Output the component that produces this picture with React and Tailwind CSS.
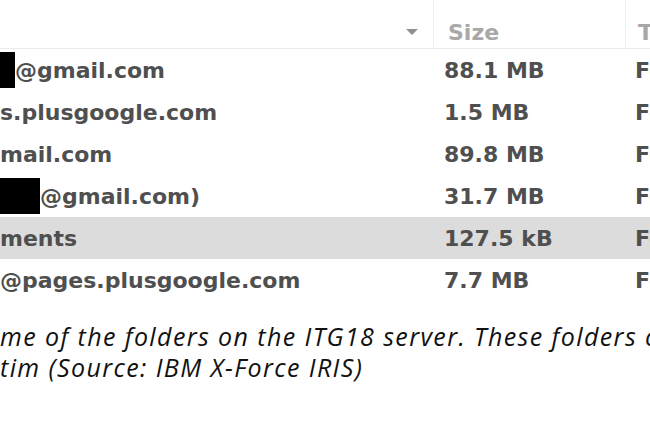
const rows = [
  { redact: 15, name: '@gmail.com', size: '88.1 MB' },
  { name: 's.plusgoogle.com', size: '1.5 MB' },
  { name: 'mail.com', size: '89.8 MB' },
  { redact: 40, name: '@gmail.com)', size: '31.7 MB' },
  { name: 'ments', size: '127.5 kB', selected: true },
  { name: '@pages.plusgoogle.com', size: '7.7 MB' },
];

export default function App() {
  return (
    <div className="w-[650px] h-[433px] overflow-hidden bg-white">
      {/* File list */}
      <div className="font-['DejaVu_Sans',sans-serif] font-bold text-[22px] text-[#4f4f4f]">
        {/* Header */}
        <div className="flex h-[49px] border-b border-[#ebebeb] text-[#a8a8a8]">
          <div className="w-[433px] shrink-0 flex items-center justify-end pr-[15px] pt-[16px]">
            <span className="w-0 h-0 border-l-[6px] border-r-[6px] border-t-[6px] border-l-transparent border-r-transparent border-t-[#909090]" />
          </div>
          <div className="w-[192px] shrink-0 flex items-center pl-[14px] pt-[16px] border-l border-[#f0f0f0]">Size</div>
          <div className="flex-1 flex items-center pl-[12px] pt-[16px] border-l border-[#f0f0f0]">T</div>
        </div>

        {/* Rows */}
        {rows.map((row, i) => (
          <div
            key={i}
            className={`flex h-[42px] items-center ${row.selected ? 'bg-[#dcdcdc]' : ''}`}
          >
            <div className="w-[433px] shrink-0 flex items-center whitespace-nowrap overflow-hidden">
              {row.redact && (
                <span className="h-[36px] bg-black shrink-0" style={{ width: row.redact }} />
              )}
              <span>{row.name}</span>
            </div>
            <div className="w-[192px] shrink-0 pl-[11px] whitespace-nowrap">{row.size}</div>
            <div className="flex-1 pl-[10px] whitespace-nowrap">Fo</div>
          </div>
        ))}
      </div>

      {/* Caption */}
      <div className="mt-[20px] font-['Open_Sans',sans-serif] italic text-[25px] leading-[31px] tracking-[1.4px] text-[#111111] whitespace-nowrap">
        <p>me of the folders on the ITG18 server. These folders c</p>
        <p>tim (Source: IBM X-Force IRIS)</p>
      </div>
    </div>
  );
}
